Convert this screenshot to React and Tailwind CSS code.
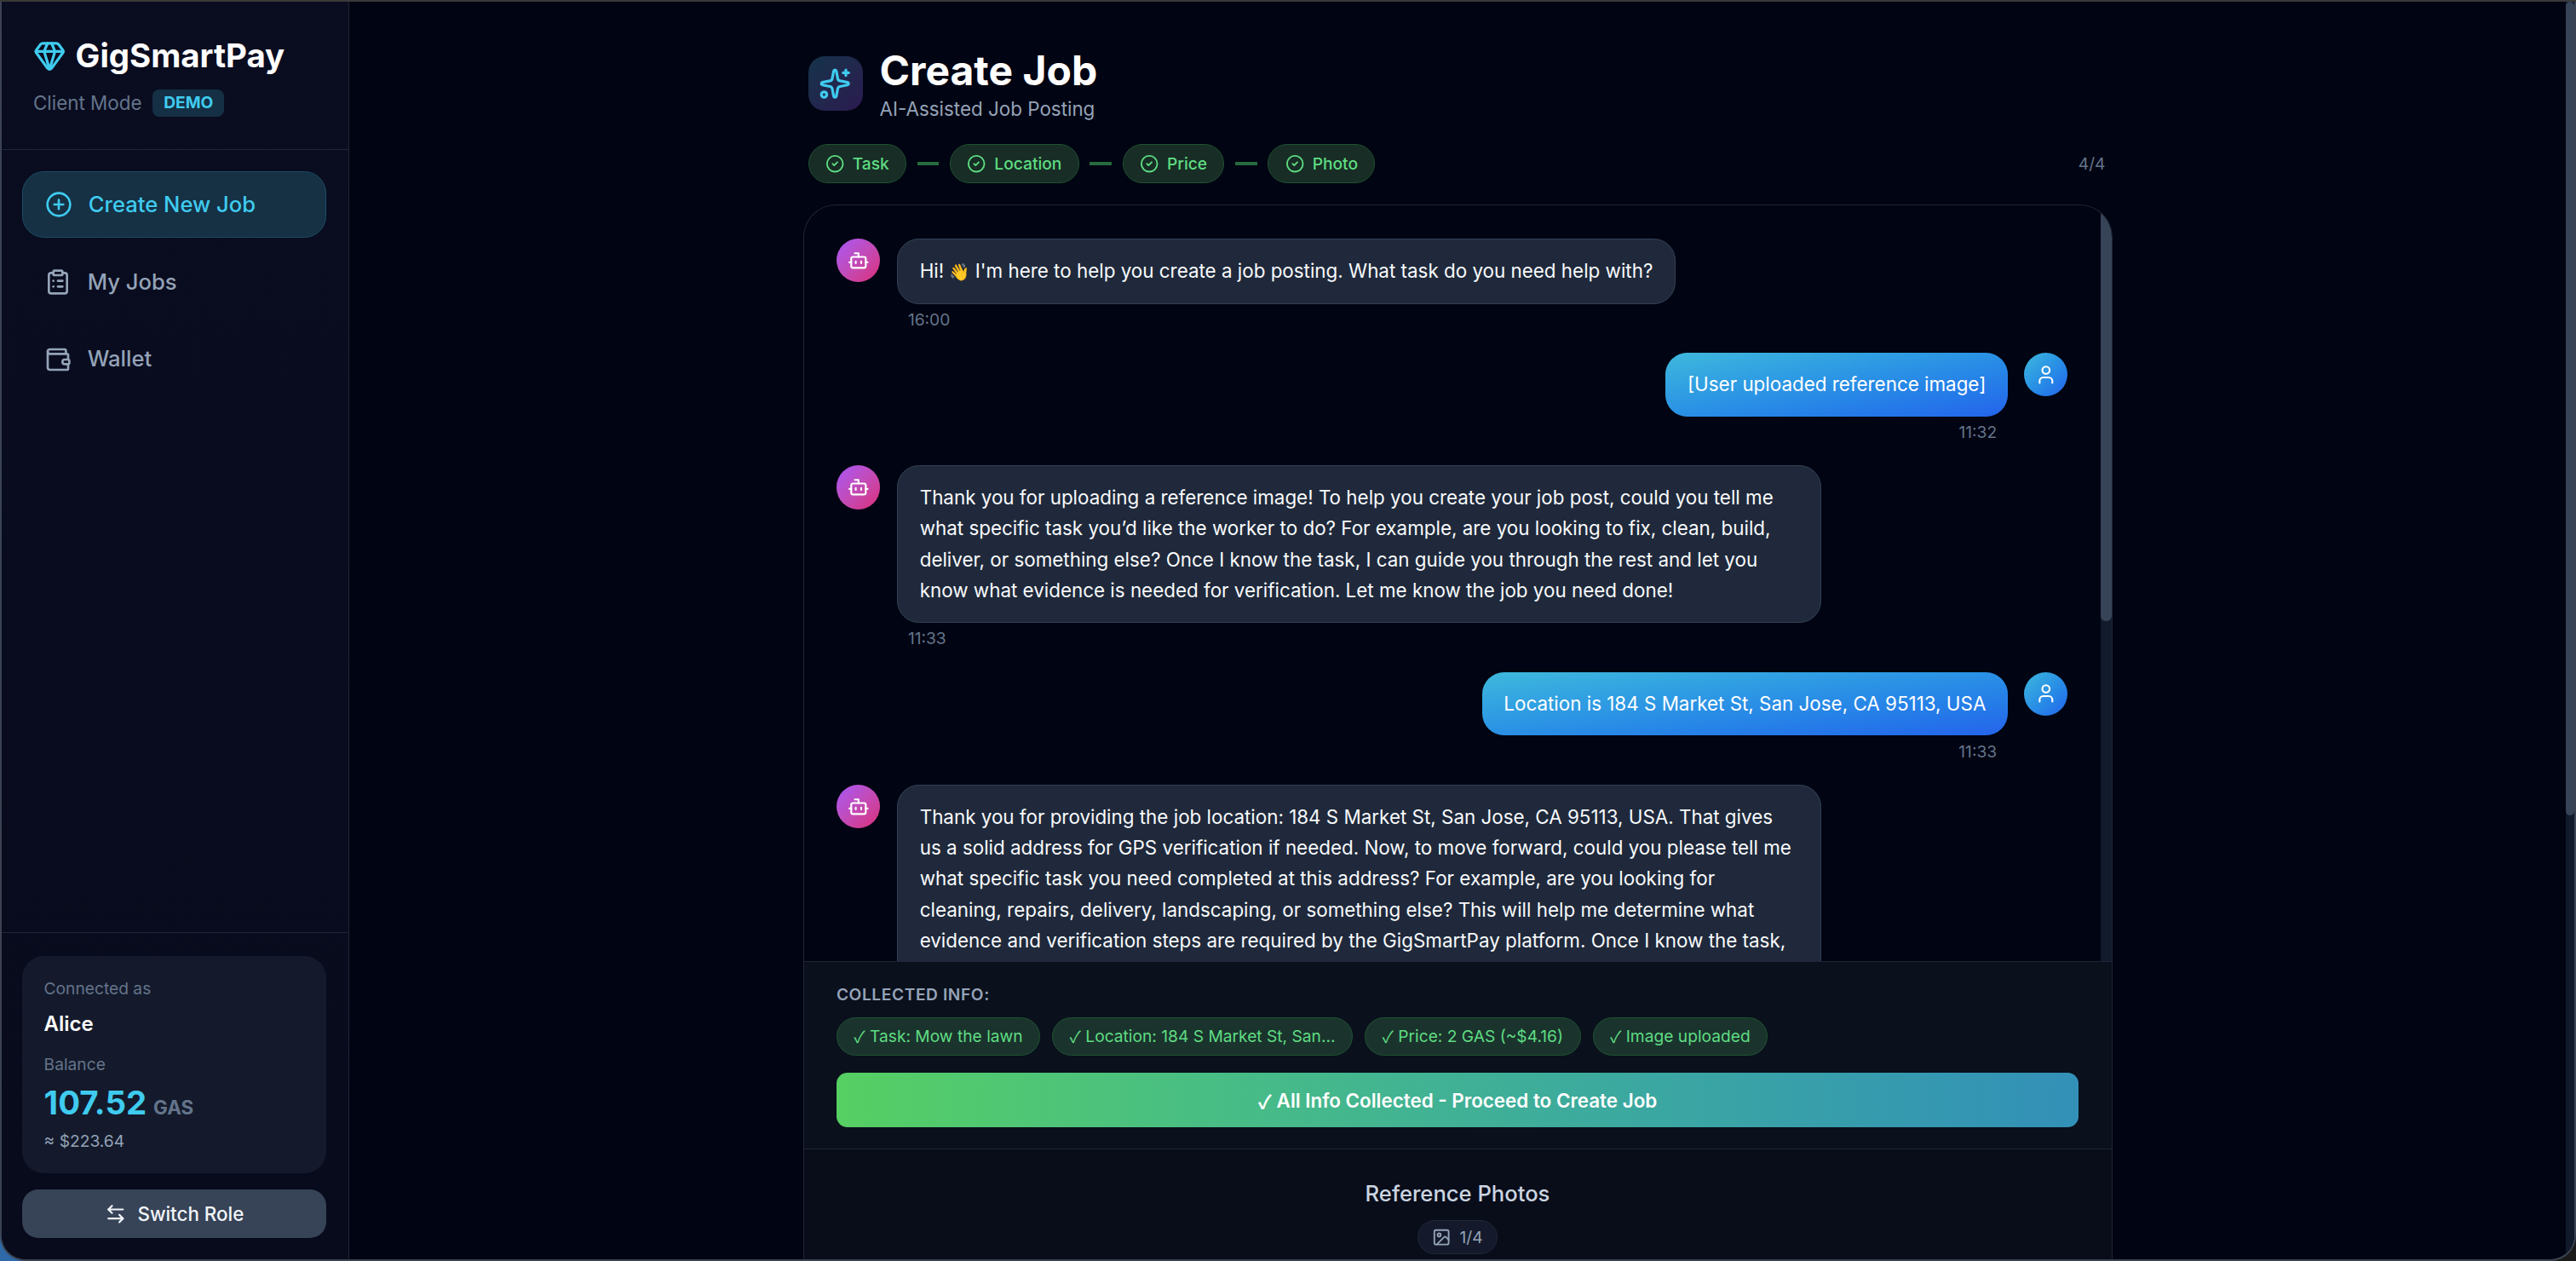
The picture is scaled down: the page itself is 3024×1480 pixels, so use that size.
import { CirclePlus, ClipboardList, Wallet, Gem, ArrowLeftRight, Sparkles, CircleCheck, Bot, User, Image } from 'lucide-react';

const messages = [
    { from: 'bot', time: '16:00', text: <>Hi! <span className="text-[19.5px]">👋</span> I'm here to help you create a job posting. What task do you need help with?</> },
    { from: 'user', time: '11:32', text: '[User uploaded reference image]' },
    { from: 'bot', long: true, time: '11:33', text: "Thank you for uploading a reference image! To help you create your job post, could you tell me what specific task you’d like the worker to do? For example, are you looking to fix, clean, build, deliver, or something else? Once I know the task, I can guide you through the rest and let you know what evidence is needed for verification. Let me know the job you need done!" },
    { from: 'user', time: '11:33', text: 'Location is 184 S Market St, San Jose, CA 95113, USA' },
    { from: 'bot', long: true, time: '11:33', text: "Thank you for providing the job location: 184 S Market St, San Jose, CA 95113, USA. That gives us a solid address for GPS verification if needed. Now, to move forward, could you please tell me what specific task you need completed at this address? For example, are you looking for cleaning, repairs, delivery, landscaping, or something else? This will help me determine what evidence and verification steps are required by the GigSmartPay platform. Once I know the task, I can give you a clear plan." },
];

const steps = ['Task', 'Location', 'Price', 'Photo'];
const chips = ['Task: Mow the lawn', 'Location: 184 S Market St, San...', 'Price: 2 GAS (~$4.16)', 'Image uploaded'];

const BotMessage = ({ msg }) => (
    <div className="flex gap-[20px]">
        <div className="w-[51.2px] h-[51.2px] shrink-0 rounded-full bg-gradient-to-br from-[#a855f7] to-[#db2777] flex items-center justify-center">
            <Bot size={25.6} color="white" strokeWidth={2} />
        </div>
        <div className="flex flex-col items-start">
            <div className={`${msg.long ? 'w-[1085px]' : 'w-fit'} bg-[#1f293b] border-[1.6px] border-[#334155] rounded-[25.6px] px-[25.6px] py-[18.7px] text-[22.4px] leading-[36.4px] text-[#f8fafc]`}>
                <div className="max-w-[1024px]">{msg.text}</div>
            </div>
            <span className="mt-[6px] ml-[12.8px] text-[19.2px] leading-[25.6px] text-[#64748b]">{msg.time}</span>
        </div>
    </div>
);

const UserMessage = ({ msg }) => (
    <div className="flex gap-[19.2px] justify-end">
        <div className="flex flex-col items-end">
            <div className="bg-gradient-to-br from-[#3fb8dc] to-[#2563eb] rounded-[25.6px] px-[25.6px] py-[19.2px] text-[22.4px] leading-[36.4px] text-white">
                {msg.text}
            </div>
            <span className="mt-[6.4px] mr-[12.8px] text-[19.2px] leading-[25.6px] text-[#64748b]">{msg.time}</span>
        </div>
        <div className="w-[51.2px] h-[51.2px] shrink-0 rounded-full bg-gradient-to-br from-[#3fb8dc] to-[#2563eb] flex items-center justify-center">
            <User size={25.6} color="white" strokeWidth={2} />
        </div>
    </div>
);

const App = () => {
    return (
        <div className="w-[3024px] h-[1480px] overflow-hidden bg-gradient-to-r from-[#2f69a8] via-[#1a1c1c] to-[#1a1a1a] font-['Inter',sans-serif]">
            <div className="h-[2px] bg-[#3a3a3a]"></div>
            <div className="h-[1478px] flex overflow-hidden rounded-bl-[30px] rounded-br-[30px] border-x-2 border-b-2 border-[#3b4352] bg-[#010412]">
                {/* Sidebar */}
                <aside className="w-[408px] shrink-0 h-full flex flex-col bg-gradient-to-b from-[#0a0d20] to-[#080b1c] border-r-[1.6px] border-[#1f2636]">
                    <div className="h-[174px] shrink-0 pl-[37px] pt-[41px] border-b-[1.6px] border-[#1f2636]">
                        <div className="flex items-center gap-[11.2px]">
                            <Gem size={38.4} color="#3fcbef" strokeWidth={2} />
                            <span className="text-[38.4px] leading-[44px] font-bold text-white">GigSmartPay</span>
                        </div>
                        <div className="flex items-center gap-[12.8px] mt-[17px]">
                            <span className="text-[22.4px] text-[#64748b]">Client Mode</span>
                            <span className="h-[32px] px-[12.8px] rounded-[8px] bg-[#153044] text-[#3fcbef] text-[19.2px] font-bold flex items-center">DEMO</span>
                        </div>
                    </div>

                    {/* Navigation */}
                    <nav className="flex-1 pl-[24px] pr-[25.6px] pt-[25px] flex flex-col gap-[12.8px]">
                        <div className="h-[78px] rounded-[25.6px] bg-[#163044] border-[1.6px] border-[#1c4d66] flex items-center gap-[19.2px] px-[25.6px] text-[#3fcbef] text-[25.6px] font-medium">
                            <CirclePlus size={32} strokeWidth={2} />
                            <span>Create New Job</span>
                        </div>
                        <div className="h-[78px] rounded-[25.6px] flex items-center gap-[19.2px] px-[25.6px] text-[#94a3b8] text-[25.6px] font-medium">
                            <ClipboardList size={32} strokeWidth={2} />
                            <span>My Jobs</span>
                        </div>
                        <div className="h-[78px] rounded-[25.6px] flex items-center gap-[19.2px] px-[25.6px] text-[#94a3b8] text-[25.6px] font-medium">
                            <Wallet size={32} strokeWidth={2} />
                            <span>Wallet</span>
                        </div>
                    </nav>

                    {/* Account */}
                    <div className="border-t-[1.6px] border-[#1f2636] pl-[24px] pr-[25.6px] pt-[27px] h-[384px] shrink-0">
                        <div className="h-[255px] rounded-[25.6px] bg-[#141a2b] px-[25.6px] pt-[24px]">
                            <div className="text-[19.2px] leading-[28px] text-[#64748b]">Connected as</div>
                            <div className="text-[24px] leading-[36px] font-semibold text-white mt-[10px]">Alice</div>
                            <div className="text-[19.2px] leading-[28px] text-[#64748b] mt-[15px]">Balance</div>
                            <div className="flex items-baseline gap-[8px] mt-[7px]">
                                <span className="text-[38.4px] leading-[48px] font-bold text-[#3fcbef]">107.52</span>
                                <span className="text-[22.4px] font-bold text-[#64748b]">GAS</span>
                            </div>
                            <div className="text-[19.2px] leading-[28px] text-[#94a3b8] mt-[7px]">≈ $223.64</div>
                        </div>
                        <div className="h-[57px] mt-[19px] rounded-[19.2px] bg-[#374357] flex items-center justify-center gap-[12.8px] text-[#f1f5f9] text-[22.4px] font-medium">
                            <ArrowLeftRight size={25.6} strokeWidth={2} />
                            <span>Switch Role</span>
                        </div>
                    </div>
                </aside>

                {/* Main */}
                <main className="flex-1 min-w-0 flex justify-center">
                    <div className="w-[1537px] flex flex-col">
                        <div className="flex items-start gap-[20px] pl-[6px] pt-[52px]">
                            <div className="w-[64px] h-[64px] mt-[12px] rounded-[19.2px] bg-gradient-to-br from-[#12334a] to-[#2a1a50] flex items-center justify-center">
                                <Sparkles size={38.4} color="#3fcbef" strokeWidth={2} />
                            </div>
                            <div>
                                <div className="text-[48px] leading-[58px] font-bold text-white">Create Job</div>
                                <div className="text-[22.4px] leading-[32px] text-[#94a3b8]">AI-Assisted Job Posting</div>
                            </div>
                        </div>

                        {/* Steps */}
                        <div className="flex items-center pl-[6px] pr-[8px] mt-[24px] h-[48px]">
                            {steps.map((step, i) => (
                                <div key={step} className="flex items-center">
                                    {i > 0 && <div className="w-[25.6px] h-[3.2px] mx-[12.8px] bg-[#256b3f]"></div>}
                                    <div className="h-[46px] rounded-full bg-[#172d25] border-[1.6px] border-[#1f5332] flex items-center gap-[9.6px] px-[19.2px] text-[#5fdc82] text-[19.2px] font-medium">
                                        <CircleCheck size={22.4} strokeWidth={2} />
                                        <span>{step}</span>
                                    </div>
                                </div>
                            ))}
                            <span className="ml-auto text-[19.2px] text-[#64748b]">4/4</span>
                        </div>

                        {/* Chat card */}
                        <div className="mt-[24px] flex-1 min-h-0 flex flex-col border-x-[1.6px] border-t-[1.6px] border-[#1f2636] rounded-t-[38.4px] overflow-hidden">
                            <div className="h-[887px] shrink-0 flex overflow-hidden">
                                <div className="flex-1 min-w-0 px-[38.4px] pt-[39px] flex flex-col gap-[25.6px]">
                                    {messages.map((msg, i) => (
                                        msg.from === 'bot' ? <BotMessage key={i} msg={msg} /> : <UserMessage key={i} msg={msg} />
                                    ))}
                                </div>
                                <div className="w-[12.8px] shrink-0 bg-[#111a2a]">
                                    <div className="h-[488px] bg-[#374357] rounded-b-[6px]"></div>
                                </div>
                            </div>

                            <div className="h-[220px] shrink-0 border-t-[1.6px] border-[#1f2636] bg-[#0a101c] px-[38.4px] pt-[25px]">
                                <div className="text-[19.2px] leading-[26px] font-semibold tracking-[0.03em] text-[#94a3b8]">COLLECTED INFO:</div>
                                <div className="flex gap-[14px] mt-[13.6px]">
                                    {chips.map((chip) => (
                                        <span key={chip} className="h-[45px] rounded-full bg-[#1a342d] border-[1.6px] border-[#1f5332] flex items-center px-[19.6px] text-[#5fdc82] text-[19.2px]">
                                            <span className="font-['Noto_Sans_CJK_SC',sans-serif]">✓</span>&nbsp;{chip}
                                        </span>
                                    ))}
                                </div>
                                <div className="h-[64px] mt-[20.8px] rounded-[12.8px] bg-gradient-to-r from-[#56cf62] to-[#3390b8] flex items-center justify-center text-white text-[22.4px] font-semibold">
                                    <span className="font-['Noto_Sans_CJK_SC',sans-serif]">✓</span>&nbsp;All Info Collected - Proceed to Create Job
                                </div>
                            </div>

                            <div className="flex-1 border-t-[1.6px] border-[#1f2636] bg-[#090d1a] flex flex-col items-center pt-[34px]">
                                <div className="text-[25.6px] leading-[36px] font-medium text-[#cbd5e1]">Reference Photos</div>
                                <div className="h-[40px] mt-[13px] rounded-full bg-[#141a2b] border-[1.6px] border-[#1f2636] flex items-center gap-[9.6px] px-[16px] text-[#94a3b8] text-[19.2px]">
                                    <Image size={22.4} strokeWidth={2} />
                                    <span>1/4</span>
                                </div>
                            </div>
                        </div>
                    </div>
                </main>

                {/* Page scrollbar */}
                <div className="w-[10px] shrink-0 h-full bg-[#111a2a]">
                    <div className="h-[955px] rounded-full bg-[#374357]"></div>
                </div>
            </div>
        </div>
    );
};

export default App;
